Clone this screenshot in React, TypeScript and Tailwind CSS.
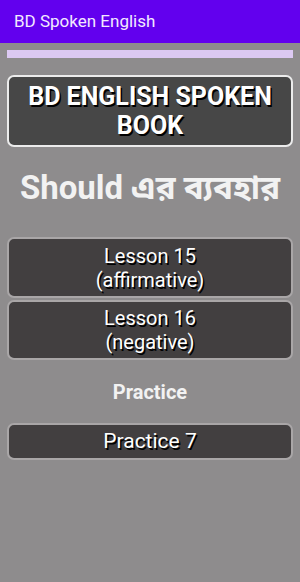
export default function App() {
  const shadow = { textShadow: '1.5px 1.5px 0 #000' };
  return (
    <div className="min-h-[582px] bg-[#8e8c8d] font-['Roboto',sans-serif]">
      {/* App bar */}
      <div className="h-[43px] bg-[#6200ee] px-[14px] flex items-center">
        <span className="text-[17px] text-[#f3e9ff]">BD Spoken English</span>
      </div>

      <div className="px-[7px] flex flex-col">
        <div className="mt-[7px] h-[8px] bg-[#dcc9f2]" />

        <div className="mt-[17px] h-[72px] rounded-[7px] border-2 border-[#ececec] bg-[#474747] flex items-center justify-center text-center">
          <span className="text-[25px] leading-[29px] font-bold text-white" style={shadow}>
            BD ENGLISH SPOKEN
            <br />
            BOOK
          </span>
        </div>

        <div className="mt-[22px] h-[38px] flex items-center justify-center">
          <span className="text-[33px] font-bold text-[#f2f2f2] font-['Roboto','Noto_Sans_Bengali','Noto_Sans',sans-serif] whitespace-nowrap">
            Should এর ব্যবহার
          </span>
        </div>

        <div className="mt-[30px] flex flex-col gap-[2px]">
          <div className="h-[61px] rounded-[7px] border-2 border-[#a9a6a7] bg-[#423f40] flex items-center justify-center text-center">
            <span className="text-[20px] leading-[24px] text-white" style={shadow}>
              Lesson 15
              <br />
              (affirmative)
            </span>
          </div>
          <div className="h-[60px] rounded-[7px] border-2 border-[#a9a6a7] bg-[#423f40] flex items-center justify-center text-center">
            <span className="text-[20px] leading-[24px] text-white" style={shadow}>
              Lesson 16
              <br />
              (negative)
            </span>
          </div>
        </div>

        <div className="mt-[20px] h-[24px] flex items-center justify-center">
          <span className="text-[20px] font-bold text-[#f2f2f2]">Practice</span>
        </div>

        <div className="mt-[19px] h-[37px] rounded-[7px] border-2 border-[#a9a6a7] bg-[#423f40] flex items-center justify-center">
          <span className="text-[21px] text-white" style={shadow}>Practice 7</span>
        </div>
      </div>
    </div>
  );
}
